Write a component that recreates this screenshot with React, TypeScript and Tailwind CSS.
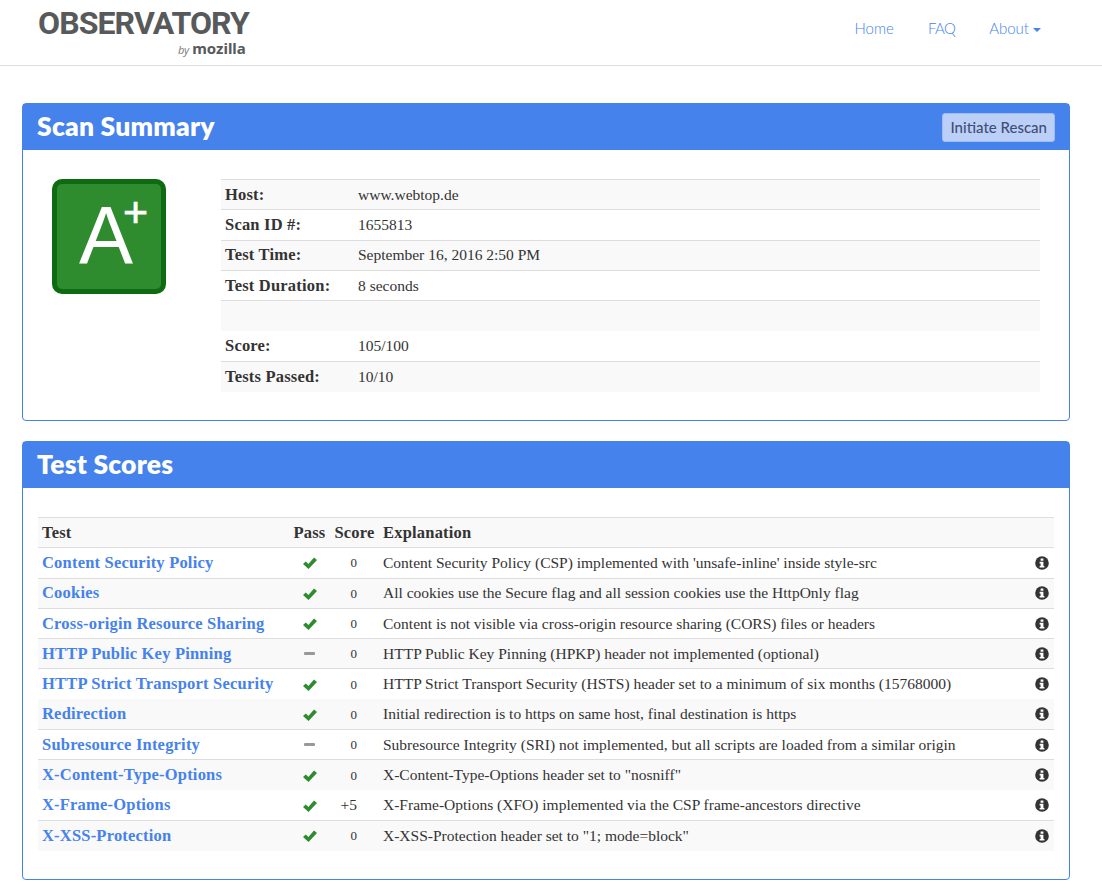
import React from "react";

const serif = "font-['Liberation_Serif',serif]";
const boldText = "text-[16.5px] font-bold tracking-[0.2px]";

const summary = [
  { label: "Host:", value: "www.webtop.de" },
  { label: "Scan ID #:", value: "1655813" },
  { label: "Test Time:", value: "September 16, 2016 2:50 PM" },
  { label: "Test Duration:", value: "8 seconds" },
  { label: "", value: "" },
  { label: "Score:", value: "105/100" },
  { label: "Tests Passed:", value: "10/10" },
];

const tests = [
  { name: "Content Security Policy", pass: true, score: "0", text: "Content Security Policy (CSP) implemented with 'unsafe-inline' inside style-src" },
  { name: "Cookies", pass: true, score: "0", text: "All cookies use the Secure flag and all session cookies use the HttpOnly flag" },
  { name: "Cross-origin Resource Sharing", pass: true, score: "0", text: "Content is not visible via cross-origin resource sharing (CORS) files or headers" },
  { name: "HTTP Public Key Pinning", pass: false, score: "0", text: "HTTP Public Key Pinning (HPKP) header not implemented (optional)" },
  { name: "HTTP Strict Transport Security", pass: true, score: "0", text: "HTTP Strict Transport Security (HSTS) header set to a minimum of six months (15768000)" },
  { name: "Redirection", pass: true, score: "0", text: "Initial redirection is to https on same host, final destination is https" },
  { name: "Subresource Integrity", pass: false, score: "0", text: "Subresource Integrity (SRI) not implemented, but all scripts are loaded from a similar origin" },
  { name: "X-Content-Type-Options", pass: true, score: "0", text: 'X-Content-Type-Options header set to "nosniff"' },
  { name: "X-Frame-Options", pass: true, score: "+5", text: "X-Frame-Options (XFO) implemented via the CSP frame-ancestors directive" },
  { name: "X-XSS-Protection", pass: true, score: "0", text: 'X-XSS-Protection header set to "1; mode=block"' },
];

const CheckIcon = () => (
  <svg width="14" height="12" viewBox="0 0 14 12" className="mt-[1px] fill-[#2e8b2e]">
    <path d="M0 7 L2.8 4.4 L5.4 6.9 L11 0.4 L14 2.9 L5.5 12 Z" />
  </svg>
);

const InfoIcon = () => (
  <svg width="14" height="14" viewBox="0 0 14 14">
    <circle cx="7" cy="7" r="6.8" className="fill-[#333333]" />
    <path
      className="fill-white"
      d="M5.6 2.4 H8.4 V4.8 H5.6 Z M4.6 5.8 H8.4 V10 H9.4 V11.6 H4.6 V10 H5.6 V7.4 H4.6 Z"
    />
  </svg>
);

const Panel = ({ title, action, children }: any) => (
  <section className="rounded border border-[#4582ec] bg-white">
    <div className="flex h-[46px] items-center justify-between bg-[#4582ec] px-[14px]">
      <h2 className="-mt-[1px] font-['Lato',sans-serif] text-[26.5px] font-extrabold tracking-[0.2px] text-white">
        {title}
      </h2>
      {action}
    </div>
    {children}
  </section>
);

const App = () => {
  return (
    <div className="h-[892px] overflow-hidden bg-white">
      <header className="flex h-[66px] justify-between border-b border-[#dddddd] pl-[38px] pr-[61px]">
        <div className="flex flex-col items-end pt-[7px]">
          <span className="font-['Roboto',sans-serif] text-[32px] font-bold leading-[33px] tracking-[-0.9px] text-[#58595b]">
            OBSERVATORY
          </span>
          <span className="mr-[3px] flex items-baseline gap-[3px] font-['Noto_Sans',sans-serif] leading-[16px]">
            <span className="text-[11px] italic text-[#808285]">by</span>
            <span className="text-[15px] font-bold text-[#58595b]">mozilla</span>
          </span>
        </div>
        <nav className="flex h-[57px] items-center gap-[34px] font-['Lato',sans-serif] text-[15px] font-light text-[#4582ec]">
          <a>Home</a>
          <a className="tracking-[-0.6px]">FAQ</a>
          <a className="flex items-center gap-[4px]">
            About
            <span className="mt-[2px] border-x-[4px] border-t-[4px] border-x-transparent border-t-[#4582ec]" />
          </a>
        </nav>
      </header>

      <main className="flex flex-col gap-[20px] pl-[22px] pr-[32px] pt-[37px]">
        <Panel
          title="Scan Summary"
          action={
            <button className="h-[29px] rounded-[3px] border border-[#9fbcf4] bg-[#bcd0f7] px-[7px] font-['Lato',sans-serif] text-[15px] font-medium text-[#3d4f78]">
              Initiate Rescan
            </button>
          }
        >
          <div className={`flex h-[270px] px-[29px] pt-[29px] ${serif}`}>
            <div className="relative h-[115px] w-[114px] shrink-0 rounded-[10px] border-[5px] border-[#0f6b12] bg-[#2e8b2e]">
              <span className="absolute left-[22px] top-[22px] font-['Liberation_Sans',sans-serif] text-[81px] leading-[58px] text-white">
                A
              </span>
              <span className="absolute left-[66px] top-[13px] font-['Liberation_Sans',sans-serif] text-[43px] leading-[30px] text-white [-webkit-text-stroke:0.7px_white]">
                +
              </span>
            </div>
            <table className="ml-[55px] w-[819px] table-fixed border-collapse self-start text-[15.5px] leading-[24px] text-[#333333]">
              <colgroup>
                <col className="w-[137px]" />
                <col />
              </colgroup>
              <tbody>
                {summary.map((row, i) => (
                  <tr
                    key={i}
                    className={`h-[30.3px] ${i % 2 === 0 ? "bg-[#f9f9f9]" : ""} ${i === 5 ? "" : "border-t border-[#dddddd]"}`}
                  >
                    <td className={`pl-[4px] ${boldText}`}>{row.label}</td>
                    <td>{row.value}</td>
                  </tr>
                ))}
              </tbody>
            </table>
          </div>
        </Panel>

        <Panel title="Test Scores">
          <div className={`h-[391px] px-[15px] pt-[29px] ${serif}`}>
            <table className="w-full table-fixed border-collapse text-[15.5px] leading-[24px] text-[#333333]">
              <colgroup>
                <col className="w-[251px]" />
                <col className="w-[41px]" />
                <col className="w-[49px]" />
                <col />
                <col className="w-[24px]" />
              </colgroup>
              <thead>
                <tr className={`h-[30.3px] border-t border-[#dddddd] bg-[#f9f9f9] ${boldText}`}>
                  <th className="pl-[4px] text-left">Test</th>
                  <th>Pass</th>
                  <th>Score</th>
                  <th className="pl-[4px] text-left">Explanation</th>
                  <th />
                </tr>
              </thead>
              <tbody>
                {tests.map((t, i) => (
                  <tr
                    key={t.name}
                    className={`h-[30.3px] ${i % 2 === 1 ? "bg-[#f9f9f9]" : ""} ${i === 5 || i === 8 ? "" : "border-t border-[#dddddd]"}`}
                  >
                    <td className={`pl-[4px] text-[#4582ec] ${boldText}`}>{t.name}</td>
                    <td>
                      <span className="flex justify-center">
                        {t.pass ? (
                          <CheckIcon />
                        ) : (
                          <span className="h-[3px] w-[11px] rounded-[1px] bg-[#999999]" />
                        )}
                      </span>
                    </td>
                    <td className="pr-[22px] text-right">
                      {t.score === "0" ? <span className="text-[13px]">0</span> : t.score}
                    </td>
                    <td className="whitespace-nowrap pl-[4px]">{t.text}</td>
                    <td>
                      <span className="flex justify-center">
                        <InfoIcon />
                      </span>
                    </td>
                  </tr>
                ))}
              </tbody>
            </table>
          </div>
        </Panel>
      </main>
    </div>
  );
};

export default App;
